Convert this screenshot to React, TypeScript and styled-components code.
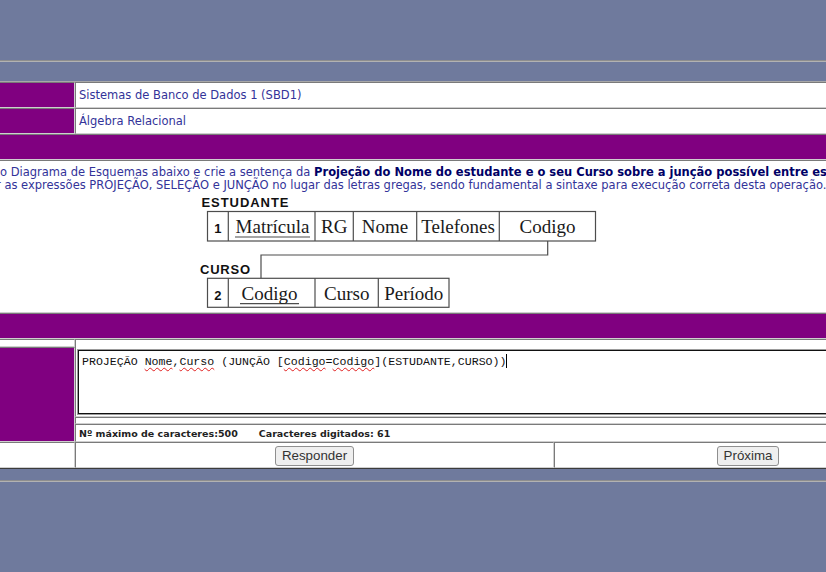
import React from "react";
import styled, { createGlobalStyle } from "styled-components";

const PURPLE = "#800080";

const GlobalStyle = createGlobalStyle`
  html, body {
    margin: 0;
    padding: 0;
  }
  body {
    background: #6f7a9d;
    overflow: hidden;
    font-family: "DejaVu Sans", Verdana, sans-serif;
  }
`;

const Page = styled.div`
  width: 826px;
  height: 572px;
  overflow: hidden;
  padding-top: 60px;
  box-sizing: border-box;
`;

const Rule = styled.div<{ $after: number }>`
  height: 2px;
  background: linear-gradient(#8e8e8e 50%, #b2b2b2 50%);
  margin-bottom: ${(p) => p.$after}px;
`;

const Board = styled.div`
  width: 944px;
  margin-left: -2px;
  background: #fff;
  border-top: 1px solid #a8a8a8;
  border-bottom: 1px solid #3c3c3c;
  margin-bottom: 11px;
`;

const Row = styled.div<{ $h: number }>`
  display: flex;
  height: ${(p) => p.$h}px;
`;

const Stack = styled.div<{ $w?: number }>`
  display: flex;
  flex-direction: column;
  ${(p) => (p.$w ? `width: ${p.$w}px; flex: none;` : `flex: 1; min-width: 0;`)}
`;

const Cell = styled.div<{ $purple?: boolean; $w?: number; $h?: number }>`
  box-sizing: border-box;
  border: 1px solid;
  border-color: #7a7a7a #cfcfcf #cfcfcf #7a7a7a;
  background: ${(p) => (p.$purple ? PURPLE : "#fff")};
  ${(p) => (p.$w ? `width: ${p.$w}px; flex: none;` : `flex: 1;`)}
  ${(p) => (p.$h ? `height: ${p.$h}px; flex: none;` : ``)}
  min-width: 0;
  overflow: hidden;
`;

const TitleCell = styled(Cell)`
  display: flex;
  align-items: center;
  padding-left: 3px;
  font-size: 11.5px;
  color: #333399;
  white-space: nowrap;
`;

const Lead = styled.p<{ $shift: number }>`
  margin: 0 0 0 ${(p) => p.$shift}px;
  white-space: nowrap;
  font-size: 11.5px;
  line-height: 13px;
  color: #333399;

  b {
    color: #000066;
  }
`;

const Content = styled(Cell)`
  padding-top: 5px;
`;

const DiagramWrap = styled.div`
  margin: 3px 0 0 199px;
  line-height: 0;
`;

const Editor = styled.div`
  margin: 10px 0 0 2px;
  height: 64px;
  box-sizing: border-box;
  border: 1px solid #111;
  outline: 1px solid #9c9c9c;
  padding: 3px 3px;
  font-family: "Liberation Mono", "DejaVu Sans Mono", monospace;
  font-size: 11.6px;
  line-height: 14px;
  color: #111;
  white-space: pre;
`;

const Typo = styled.span`
  text-decoration: underline wavy #e02020;
  text-decoration-thickness: 1px;
  text-underline-offset: 2px;
`;

const Caret = styled.span`
  display: inline-block;
  width: 1px;
  height: 14px;
  background: #000;
  vertical-align: -3px;
`;

const CounterCell = styled(Cell)`
  display: flex;
  align-items: center;
  padding-left: 3px;
  font-size: 9.5px;
  font-weight: bold;
  color: #222;
  white-space: nowrap;
`;

const Counter = styled.span<{ $gap?: number }>`
  margin-left: ${(p) => p.$gap ?? 0}px;
`;

const ButtonCell = styled(Cell)`
  display: flex;
  align-items: center;
  justify-content: center;
`;

const Button = styled.button`
  height: 20px;
  padding: 0 6px;
  margin-top: 1px;
  background: #efefef;
  border: 1px solid #8f8f8f;
  border-radius: 3px;
  font-family: "Liberation Sans", Arial, sans-serif;
  font-size: 13.33px;
  color: #333;
`;

const tableStroke = { fill: "none", stroke: "#4d4d4d", strokeWidth: 1.2 };

const Diagram = () => (
  <svg width="402" height="116" viewBox="0 0 402 116">
    <g {...tableStroke}>
      <rect x="9.5" y="16.5" width="388" height="29.5" />
      {[30.3, 117, 155.3, 218.7, 301.3].map((x) => (
        <line key={x} x1={x} y1="16.5" x2={x} y2="46" />
      ))}
      <polyline points="349.7,46 349.7,60 63,60 63,83.3" />
      <rect x="9.5" y="83.3" width="241.5" height="29" />
      {[30.3, 117, 180.3].map((x) => (
        <line key={x} x1={x} y1="83.3" x2={x} y2="112.3" />
      ))}
      <line x1="37" y1="42" x2="112" y2="42" />
      <line x1="42" y1="108.6" x2="101" y2="108.6" />
    </g>
    <g fontFamily="'Liberation Sans', Arial, sans-serif" fontWeight="bold" fill="#111">
      <text x="3.5" y="12" fontSize="13" textLength="87" lengthAdjust="spacing">
        ESTUDANTE
      </text>
      <text x="2" y="78.5" fontSize="13" textLength="50" lengthAdjust="spacing">
        CURSO
      </text>
      <text x="19.8" y="37.5" fontSize="13" textAnchor="middle">1</text>
      <text x="19.8" y="104.5" fontSize="13" textAnchor="middle">2</text>
    </g>
    <g fontFamily="'Liberation Serif', 'Times New Roman', serif" fontSize="19" fill="#1a1a1a" textAnchor="middle">
      <text x="74.5" y="38">Matrícula</text>
      <text x="136.2" y="38">RG</text>
      <text x="187" y="38">Nome</text>
      <text x="260" y="38">Telefones</text>
      <text x="349.5" y="38">Codigo</text>
      <text x="71.5" y="105">Codigo</text>
      <text x="148.7" y="105">Curso</text>
      <text x="215.7" y="105">Período</text>
    </g>
  </svg>
);

const App = () => {
  return (
    <>
      <GlobalStyle />
      <Page>
        <Rule $after={19} />
        <Board>
          <Row $h={26}>
            <Cell $purple $w={77} />
            <TitleCell>Sistemas de Banco de Dados 1 (SBD1)</TitleCell>
          </Row>
          <Row $h={26}>
            <Cell $purple $w={77} />
            <TitleCell>Álgebra Relacional</TitleCell>
          </Row>
          <Row $h={26}>
            <Cell $purple />
          </Row>
          <Row $h={153}>
            <Content>
              <Lead $shift={1}>
                o Diagrama de Esquemas abaixo e crie a sentença da{" "}
                <b>
                  Projeção do Nome do estudante e o seu Curso sobre a junção
                  possível entre estes dois esquemas
                </b>
              </Lead>
              <Lead $shift={-3}>
                r as expressões PROJEÇÃO, SELEÇÃO e JUNÇÃO no lugar das letras
                gregas, sendo fundamental a sintaxe para execução correta desta
                operação.
              </Lead>
              <DiagramWrap>
                <Diagram />
              </DiagramWrap>
            </Content>
          </Row>
          <Row $h={26}>
            <Cell $purple />
          </Row>
          <Row $h={103}>
            <Stack $w={77}>
              <Cell $h={8} />
              <Cell $purple />
            </Stack>
            <Stack>
              <Cell $h={78}>
                <Editor>
                  PROJEÇÃO <Typo>Nome</Typo>,<Typo>Curso</Typo> (JUNÇÃO [
                  <Typo>Codigo</Typo>=<Typo>Codigo</Typo>](ESTUDANTE,CURSO))
                  <Caret />
                </Editor>
              </Cell>
              <Cell $h={7} />
              <CounterCell>
                <Counter>Nº máximo de caracteres:500</Counter>
                <Counter $gap={21}>Caracteres digitados: 61</Counter>
              </CounterCell>
            </Stack>
          </Row>
          <Row $h={26}>
            <Cell $w={77} />
            <ButtonCell $w={479}>
              <Button type="button">Responder</Button>
            </ButtonCell>
            <ButtonCell>
              <Button type="button">Próxima</Button>
            </ButtonCell>
          </Row>
        </Board>
        <Rule $after={0} />
      </Page>
    </>
  );
};

export default App;
